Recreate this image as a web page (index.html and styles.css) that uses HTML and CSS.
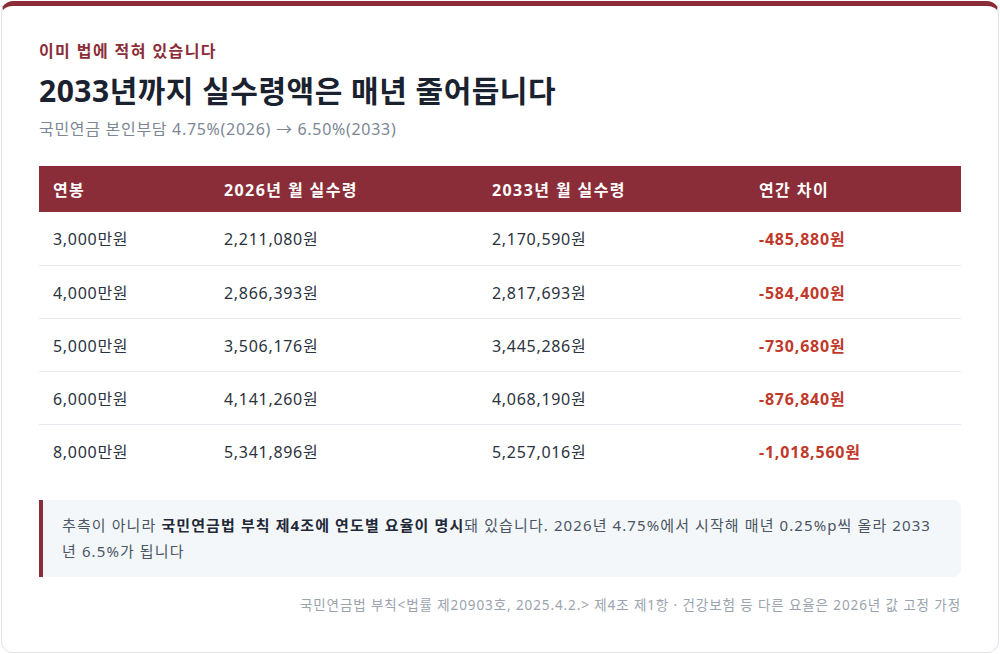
FILE: index.html
```html
<!DOCTYPE html>
<html lang="ko">
<head>
<meta charset="utf-8">
<link rel="stylesheet" href="styles.css">
</head>
<body>
<div class="card">
  <div class="eyebrow">이미 법에 적혀 있습니다</div>
  <h1 class="title">2033년까지 실수령액은 매년 줄어듭니다</h1>
  <div class="subtitle">국민연금 본인부담 4.75%(2026) → 6.50%(2033)</div>
  <table class="tbl">
    <thead>
      <tr><th class="c1">연봉</th><th class="c2">2026년 월 실수령</th><th class="c3">2033년 월 실수령</th><th class="c4">연간 차이</th></tr>
    </thead>
    <tbody>
      <tr><td>3,000만원</td><td>2,211,080원</td><td>2,170,590원</td><td class="neg">-485,880원</td></tr>
      <tr><td>4,000만원</td><td>2,866,393원</td><td>2,817,693원</td><td class="neg">-584,400원</td></tr>
      <tr><td>5,000만원</td><td>3,506,176원</td><td>3,445,286원</td><td class="neg">-730,680원</td></tr>
      <tr><td>6,000만원</td><td>4,141,260원</td><td>4,068,190원</td><td class="neg">-876,840원</td></tr>
      <tr><td>8,000만원</td><td>5,341,896원</td><td>5,257,016원</td><td class="neg">-1,018,560원</td></tr>
    </tbody>
  </table>
  <div class="note">추측이 아니라 <strong>국민연금법 부칙 제4조에 연도별 요율이 명시</strong>돼 있습니다. 2026년 4.75%에서 시작해 매년 0.25%p씩 올라 2033<br>년 6.5%가 됩니다</div>
  <div class="source">국민연금법 부칙&lt;법률 제20903호, 2025.4.2.&gt; 제4조 제1항 · 건강보험 등 다른 요율은 2026년 값 고정 가정</div>
</div>
</body>
</html>
```
FILE: styles.css
```css
* { box-sizing: border-box; }
html, body { margin: 0; padding: 0; background: #ffffff; }
body {
  font-family: "Noto Sans", "Noto Sans CJK KR", sans-serif;
  color: #1f2937;
  padding: 1px;
}
.card {
  height: 652px;
  border: 1px solid #e3e7ec;
  border-top: 5px solid #8b2d38;
  border-radius: 12px;
  background: #fff;
  padding: 34px 37px 0 37px;
}
.eyebrow {
  color: #8b2d38;
  font-size: 16px;
  font-weight: 700;
  letter-spacing: 1.4px;
  line-height: 22px;
}
.title {
  margin: 10px 0 0 0;
  font-size: 30px;
  font-weight: 700;
  letter-spacing: 0.5px;
  color: #1a2230;
  line-height: 38px;
}
.subtitle {
  margin-top: 8px;
  font-size: 16px;
  letter-spacing: 0.7px;
  color: #7d8794;
  line-height: 22px;
}
.tbl {
  margin-top: 26px;
  width: 100%;
  border-collapse: collapse;
  table-layout: fixed;
  font-size: 16px;
  letter-spacing: 0.7px;
}
.tbl th {
  background: #8b2d38;
  color: #fff;
  font-weight: 700;
  text-align: left;
  height: 46px;
  padding: 0 14px;
  letter-spacing: 1.4px;
}
.c1 { width: 171px; }
.c2 { width: 268px; }
.c3 { width: 267px; }
.tbl td {
  height: 53px;
  padding: 0 14px;
  border-bottom: 1px solid #e8ebef;
  color: #2b3340;
}
.tbl tbody tr:last-child td { border-bottom: none; }
.tbl td.neg { color: #c0392b; font-weight: 700; letter-spacing: 0.8px; }
.note {
  margin-top: 23px;
  background: #f4f7fa;
  border-left: 4px solid #8b2d38;
  border-radius: 0 8px 8px 0;
  padding: 12px 12px 13px 19px;
  font-size: 15px;
  letter-spacing: 1.1px;
  line-height: 26px;
  color: #4a5563;
}
.note strong { color: #1f2937; font-weight: 700; }
.source {
  margin-top: 18px;
  text-align: right;
  font-size: 13.5px;
  letter-spacing: 0.9px;
  color: #9aa3ae;
  line-height: 20px;
}
```
